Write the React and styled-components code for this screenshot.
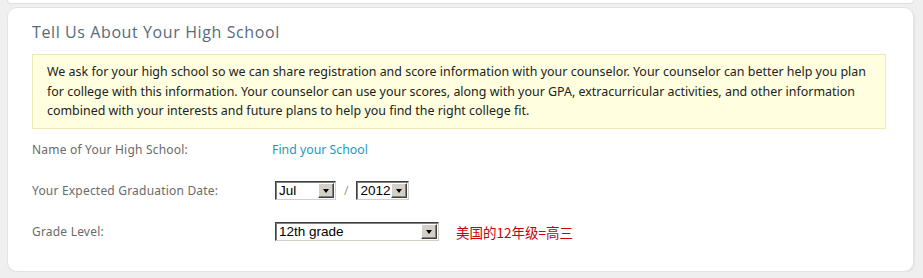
import React from 'react'
import styled, { createGlobalStyle } from 'styled-components'

const GlobalStyle = createGlobalStyle`
    html, body {
        margin: 0;
        padding: 0;
        background: #efefef;
    }
`

const Page = styled.div`
    padding: 0 9px 0 7px;
    font-family: "Noto Sans", "Liberation Sans", sans-serif;
`

const PrevPanel = styled.div`
    height: 3px;
    background: #fff;
    border: 1px solid #e0e0e0;
    border-top: none;
    border-radius: 0 0 8px 8px;
`

const Panel = styled.section`
    margin-top: 3px;
    background: #fff;
    border: 1px solid #e3e3e3;
    border-radius: 10px;
    padding: 14px 27px 29px 24px;
    box-shadow: 1px 1px 2px rgba(0, 0, 0, 0.05);
`

const Heading = styled.h2`
    margin: 0 0 12px;
    font-family: "Open Sans", Lato, sans-serif;
    font-weight: normal;
    font-size: 16px;
    letter-spacing: 0.6px;
    line-height: 20px;
    color: #566b7c;
`

const Notice = styled.div`
    background: #ffffe0;
    border: 1px solid #ebeab6;
    padding: 7px 14px 7px;
    font-size: 12.45px;
    line-height: 19.5px;
    color: #222;
`

const Line = styled.span`
    display: block;
    white-space: nowrap;
`

const Form = styled.div`
    margin-top: 11px;
    display: grid;
    grid-template-columns: 240px auto;
    row-gap: 21px;
    align-items: center;
`

const Label = styled.div`
    font-size: 12px;
    color: #6a6a6a;
    letter-spacing: 0.2px;
    line-height: 20px;
`

const Field = styled.div`
    display: flex;
    align-items: center;
    gap: 8px;
    min-height: 20px;
    padding-left: ${p => p.$indent || 0}px;
`

const Link = styled.a`
    font-size: 12.3px;
    color: #1c9ac2;
    text-decoration: none;
    cursor: pointer;
`

const Slash = styled.span`
    font-size: 12px;
    color: #999;
`

const Select = styled.div`
    display: inline-flex;
    box-sizing: border-box;
    width: ${p => p.width}px;
    height: 19px;
    background: #fff;
    border-top: 1px solid #404040;
    border-left: 1px solid #404040;
    border-right: 1px solid #d4d0c8;
    border-bottom: 1px solid #d4d0c8;
    box-shadow: inset 1px 1px 0 #808080;
`

const SelectValue = styled.span`
    flex: 1;
    padding: 0 0 0 3px;
    font-family: "Liberation Sans", Arial, sans-serif;
    font-size: 13.5px;
    line-height: 17px;
    color: #000;
    white-space: nowrap;
    overflow: hidden;
`

const SelectButton = styled.span`
    width: 16px;
    margin: 1px 1px 1px 0;
    box-sizing: border-box;
    background: #d4d0c8;
    border-top: 1px solid #fff;
    border-left: 1px solid #fff;
    border-right: 1px solid #404040;
    border-bottom: 1px solid #404040;
    box-shadow: inset -1px -1px 0 #808080;
    display: flex;
    align-items: center;
    justify-content: center;
    &::after {
        content: "";
        border-left: 3.5px solid transparent;
        border-right: 3.5px solid transparent;
        border-top: 4px solid #000;
    }
`

const Note = styled.span`
    margin-left: 9px;
    font-family: "Noto Sans CJK SC", "Liberation Sans", sans-serif;
    font-size: 13.5px;
    color: #cc0000;
`

const FakeSelect = ({ width, value }) => (
    <Select width={width}>
        <SelectValue>{value}</SelectValue>
        <SelectButton />
    </Select>
)

export default function App() {
    return (
        <Page>
            <GlobalStyle />
            <PrevPanel />
            <Panel>
                <Heading>Tell Us About Your High School</Heading>
                <Notice>
                    <Line>We ask for your high school so we can share registration and score information with your counselor. Your counselor can better help you plan</Line>
                    <Line>for college with this information. Your counselor can use your scores, along with your GPA, extracurricular activities, and other information</Line>
                    <Line>combined with your interests and future plans to help you find the right college fit.</Line>
                </Notice>
                <Form>
                    <Label>Name of Your High School:</Label>
                    <Field><Link>Find your School</Link></Field>

                    <Label>Your Expected Graduation Date:</Label>
                    <Field $indent={3}>
                        <FakeSelect width={61} value="Jul" />
                        <Slash>/</Slash>
                        <FakeSelect width={53} value="2012" />
                    </Field>

                    <Label>Grade Level:</Label>
                    <Field $indent={3}>
                        <FakeSelect width={164} value="12th grade" />
                        <Note>美国的12年级=高三</Note>
                    </Field>
                </Form>
            </Panel>
        </Page>
    )
}
